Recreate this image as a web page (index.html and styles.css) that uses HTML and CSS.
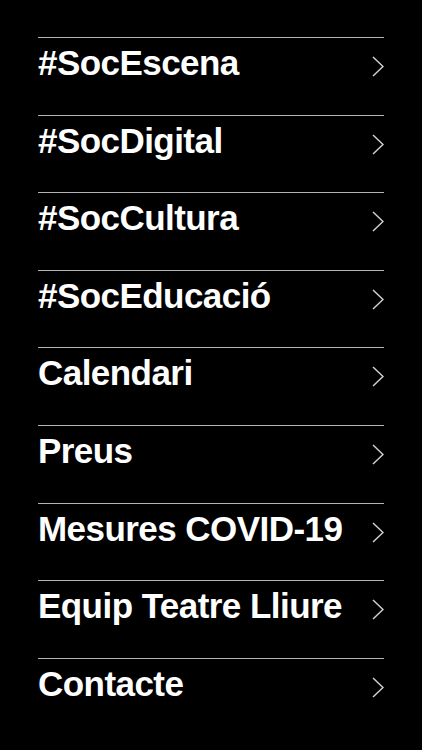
FILE: index.html
```html
<!DOCTYPE html>
<html lang="ca">
<head>
<meta charset="utf-8">
<title>Menú</title>
<link rel="stylesheet" href="styles.css">
</head>
<body>
<nav class="menu">
  <a class="item" href="#"><span class="label">#SocEscena</span><svg class="chev" viewBox="0 0 12 21"><polyline points="1,1 11,10.5 1,20"/></svg></a>
  <a class="item" href="#"><span class="label">#SocDigital</span><svg class="chev" viewBox="0 0 12 21"><polyline points="1,1 11,10.5 1,20"/></svg></a>
  <a class="item" href="#"><span class="label">#SocCultura</span><svg class="chev" viewBox="0 0 12 21"><polyline points="1,1 11,10.5 1,20"/></svg></a>
  <a class="item" href="#"><span class="label">#SocEducació</span><svg class="chev" viewBox="0 0 12 21"><polyline points="1,1 11,10.5 1,20"/></svg></a>
  <a class="item" href="#"><span class="label">Calendari</span><svg class="chev" viewBox="0 0 12 21"><polyline points="1,1 11,10.5 1,20"/></svg></a>
  <a class="item" href="#"><span class="label">Preus</span><svg class="chev" viewBox="0 0 12 21"><polyline points="1,1 11,10.5 1,20"/></svg></a>
  <a class="item" href="#"><span class="label">Mesures COVID-19</span><svg class="chev" viewBox="0 0 12 21"><polyline points="1,1 11,10.5 1,20"/></svg></a>
  <a class="item" href="#"><span class="label">Equip Teatre Lliure</span><svg class="chev" viewBox="0 0 12 21"><polyline points="1,1 11,10.5 1,20"/></svg></a>
  <a class="item" href="#"><span class="label">Contacte</span><svg class="chev" viewBox="0 0 12 21"><polyline points="1,1 11,10.5 1,20"/></svg></a>
</nav>
</body>
</html>
```
FILE: styles.css
```css
html, body {
  margin: 0;
  background: #000;
  height: 100%;
  overflow: hidden;
}
.menu {
  display: flex;
  flex-direction: column;
  padding: 37px 38px 0 38px;
  font-family: "Liberation Sans", Arial, sans-serif;
}
.item {
  display: flex;
  justify-content: space-between;
  align-items: flex-start;
  height: 77.6px;
  box-sizing: border-box;
  border-top: 1px solid #b4b4b4;
  padding-top: 5px;
  color: #fff;
  text-decoration: none;
}
.label {
  font-size: 35px;
  font-weight: 700;
  line-height: 40px;
  letter-spacing: -0.55px;
}
.chev {
  width: 12px;
  height: 21px;
  margin-top: 13px;
  margin-right: 0;
  fill: none;
  stroke: #d0d0d0;
  stroke-width: 1.5;
}
```
